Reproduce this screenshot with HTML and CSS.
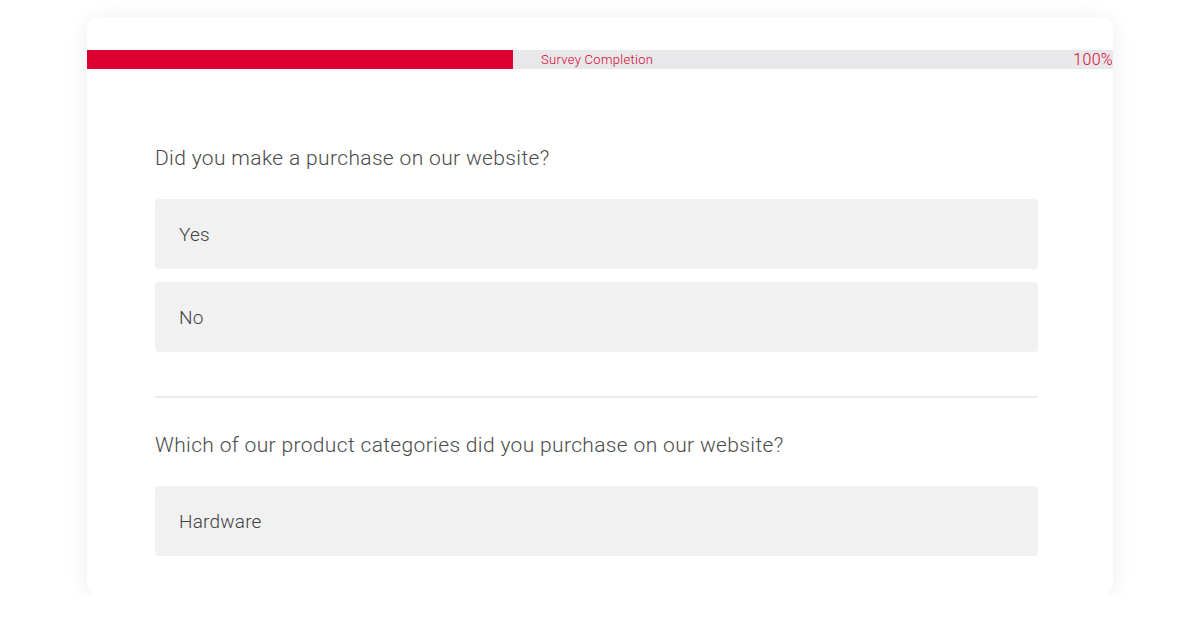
FILE: index.html
```html
<!DOCTYPE html>
<html lang="en">
<head>
<meta charset="utf-8">
<title>Survey</title>
<link rel="stylesheet" href="styles.css">
</head>
<body>
<div class="card">
  <div class="progress">
    <div class="progress-fill" style="width:426px"></div>
    <div class="progress-info">
      <span class="progress-label">Survey Completion</span>
      <span class="progress-pct">100%</span>
    </div>
  </div>
  <div class="content">
    <div class="question">Did you make a purchase on our website?</div>
    <div class="options">
      <div class="option">Yes</div>
      <div class="option">No</div>
    </div>
    <div class="divider"></div>
    <div class="question q2">Which of our product categories did you purchase on our website?</div>
    <div class="options">
      <div class="option">Hardware</div>
    </div>
  </div>
</div>
</body>
</html>
```
FILE: styles.css
```css
html, body {
  margin: 0;
  padding: 0;
  background: #ffffff;
}
body {
  font-family: Roboto, "Liberation Sans", sans-serif;
  padding-top: 17px;
}
.card {
  width: 1026px;
  margin: 0 auto;
  box-sizing: border-box;
  background: #fff;
  border-radius: 12px;
  box-shadow: 0 3px 22px rgba(0, 0, 0, 0.075);
  padding-top: 33px;
  padding-bottom: 39px;
}
.progress {
  display: flex;
  height: 19px;
  background: #e8e8ea;
  align-items: center;
}
.progress-fill {
  height: 100%;
  background: #dd0031;
  flex: none;
}
.progress-info {
  flex: 1;
  display: flex;
  justify-content: space-between;
  align-items: center;
  padding-left: 28px;
  color: #dd0031;
}
.progress-label {
  font-size: 13px;
  font-weight: 300;
  letter-spacing: 0.3px;
}
.progress-pct {
  font-size: 16px;
  font-weight: 300;
  letter-spacing: 0.3px;
}
.content {
  padding: 0 75px 0 68px;
}
.question {
  font-size: 21px;
  font-weight: 300;
  letter-spacing: 0.35px;
  line-height: 24px;
  color: #4a4a4a;
  margin-top: 77px;
  margin-bottom: 29px;
}
.question.q2 {
  margin-top: 35px;
}
.options {
  display: flex;
  flex-direction: column;
  gap: 13px;
}
.option {
  height: 70px;
  background: #f1f1f1;
  border-radius: 4px;
  display: flex;
  align-items: center;
  padding-left: 24px;
  font-size: 19px;
  font-weight: 300;
  letter-spacing: 0.2px;
  color: #3f3f3f;
}
.divider {
  height: 2px;
  background: #ececec;
  margin-top: 44px;
}
```
